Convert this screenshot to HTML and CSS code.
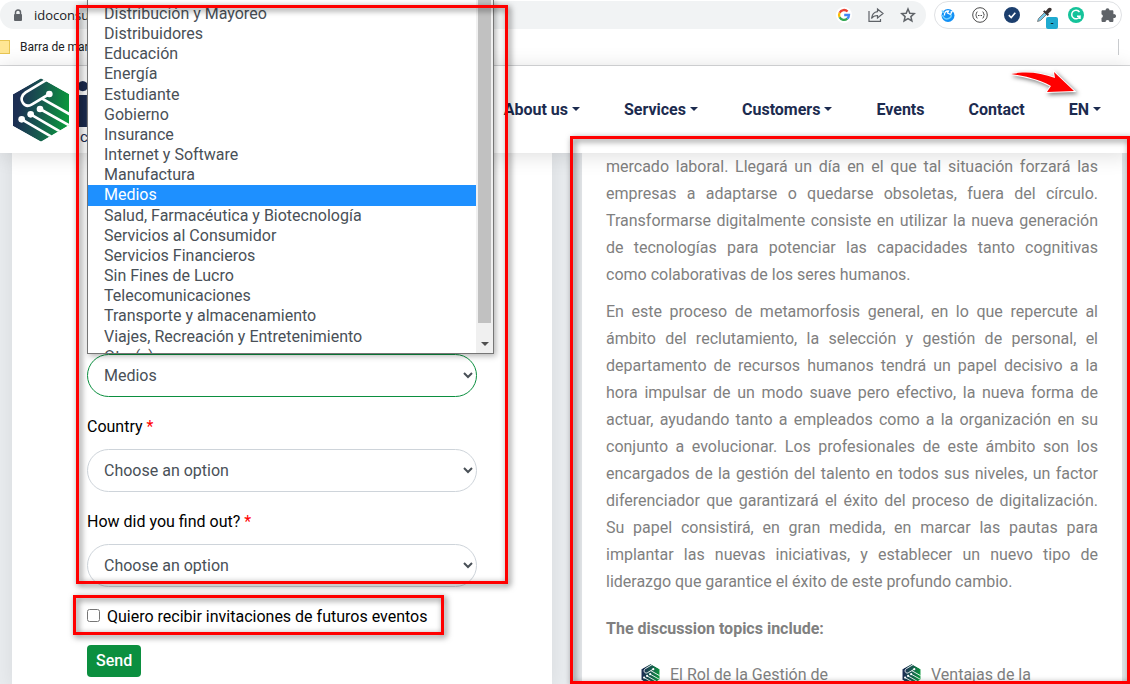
FILE: index.html
```html
<!DOCTYPE html>
<html lang="en">
<head>
<meta charset="utf-8">
<title>ido</title>
<link rel="stylesheet" href="styles.css">
</head>
<body>
<svg class="defs" aria-hidden="true">
  <defs>
    <linearGradient id="hex-fill" x1="0" y1="0.35" x2="1" y2="0.5">
      <stop offset="0.1" stop-color="#1c2f53"/>
      <stop offset="0.5" stop-color="#17594f"/>
      <stop offset="1" stop-color="#0a9a3c"/>
    </linearGradient>
    <symbol id="hex" viewBox="0 0 168 190">
      <clipPath id="hex-clip"><path d="M84 0L168 47V141L84 190L0 143V48Z"/></clipPath>
      <g clip-path="url(#hex-clip)">
        <path fill="url(#hex-fill)" d="M84 0L168 47V141L84 190L0 143V48Z"/>
        <g fill="none" stroke="#fff" stroke-width="8">
          <path d="M108 0L38 42C26 50 22 63 30 74C37 84 47 84 57 78L109 47"/>
          <path d="M86 60L172 109"/>
          <path d="M81 92L172 143M53 108L152 166M26 123L124 180"/>
        </g>
        <g fill="#fff">
          <circle cx="109" cy="47" r="10"/><circle cx="81" cy="92" r="10"/>
          <circle cx="53" cy="108" r="10"/><circle cx="26" cy="123" r="10"/>
        </g>
      </g>
    </symbol>
  </defs>
</svg>

<div class="browser">
  <div class="toolbar">
    <div class="address">
      <svg class="lock" viewBox="0 0 10 13"><path d="M2.5 6V3.5a2.5 2.5 0 0 1 5 0V6" fill="none" stroke="#5f6368" stroke-width="1.5"/><rect x="1" y="5" width="8" height="7" rx="1" fill="#5f6368"/></svg>
      <span class="url">idoconsu</span>
      <div class="address-tools">
        <button type="button" class="tool" aria-label="Google"><svg viewBox="0 0 16 16"><circle cx="8" cy="8" r="8" fill="#fff"/><g fill="none" stroke-width="2.3"><path d="M11.6 4.5A5 5 0 0 0 3.6 5.7" stroke="#ea4335"/><path d="M3.6 5.7a5 5 0 0 0 0 4.6" stroke="#fbbc05"/><path d="M3.6 10.3a5 5 0 0 0 7.7 1.4" stroke="#34a853"/><path d="M11.3 11.7A5 5 0 0 0 13 8H8.2" stroke="#4285f4"/></g></svg></button>
        <button type="button" class="tool" aria-label="Share"><svg viewBox="0 0 16 16" fill="none" stroke="#5f6368" stroke-width="1.2"><path d="M1 4V14.400H12.500V12"/><path d="M9.500 2L15 6.500L9.500 11V8.500C6.500 8.500 4.800 9.500 3.500 11.500C4 7.500 6 5 9.500 4.600Z"/></svg></button>
        <button type="button" class="tool" aria-label="Bookmark"><svg viewBox="0 0 16 16" fill="none" stroke="#5f6368" stroke-width="1.500"><path d="M8 2L9.800 6.200L14.300 6.600L10.900 9.600L11.900 14L8 11.700L4.100 14L5.100 9.600L1.700 6.600L6.200 6.200Z"/></svg></button>
      </div>
    </div>
    <div class="extensions">
      <button type="button" class="tool" aria-label="Browser sync"><svg viewBox="0 0 16 16"><circle cx="8" cy="8.500" r="6.500" fill="#1290f5"/><path d="M4.500 8.500C4 5.500 6 3.800 8.500 4L7.500 6L10.500 7.500L12 4.500L10.500 5" fill="none" stroke="#fff" stroke-width="1.300"/><path d="M2 3.500C2.500 5 3.200 5.600 4.500 5.500M2.500 8C3 11.500 6 12.500 8.500 11.500C10.500 10.800 11.500 9 11 7.500" fill="none" stroke="#6fd0ff" stroke-width="1.500"/></svg></button>
      <button type="button" class="tool" aria-label="JSON viewer"><svg viewBox="0 0 16 16" fill="none" stroke="#4b4b4b"><circle cx="8" cy="8" r="7.300"/><path d="M5.500 4.800C3.800 4.800 5 7.500 3.500 8C5 8.500 3.800 11.200 5.500 11.200M10.500 4.800C12.200 4.800 11 7.500 12.500 8C11 8.500 12.200 11.200 10.500 11.200"/><path d="M6 8.500H10" stroke-dasharray="1 0.500"/></svg></button>
      <button type="button" class="tool" aria-label="Checker"><svg viewBox="0 0 16 16"><circle cx="8" cy="8" r="8" fill="#1c3f6e"/><path d="M4.800 8.200L7.200 10.500L11.300 5.800" fill="none" stroke="#fff" stroke-width="1.600"/></svg></button>
      <button type="button" class="tool" aria-label="Color picker"><svg viewBox="0 0 16 16"><path d="M1.500 14.500L2.500 11.500L8.500 5.500L10.500 7.500L4.500 13.500Z" fill="#75c8e8" stroke="#777" stroke-width="0.900"/><path d="M7 4.500L8.500 3.200L9.700 4.200L12 1.500C13 0.500 14.500 0.500 15.200 1.300C16 2 15.700 3.500 14.800 4.300L12.200 6.600L13 7.700L11.600 9Z" fill="#3c3434"/></svg><span class="tool-badge">-</span></button>
      <button type="button" class="tool" aria-label="Grammar"><svg viewBox="0 0 16 16"><circle cx="8" cy="8" r="8" fill="#15c39a"/><path d="M11.500 5A4.300 4.300 0 1 0 12 9.200H9M12 9.200V12" fill="none" stroke="#fff" stroke-width="1.500"/></svg></button>
      <button type="button" class="tool" aria-label="Extensions"><svg viewBox="0 0 16 16"><path d="M1.500 4.500C1.500 3.700 2 3.200 2.800 3.200H5.500A2 2 0 1 1 9.500 3.200H12.200C13 3.200 13.400 3.700 13.400 4.500V7.200A2 2 0 1 1 13.400 11V13.700C13.400 14.500 13 15 12.200 15H9.500A2 2 0 0 0 5.500 15H2.800C2 15 1.500 14.500 1.500 13.700V11A2 2 0 0 0 1.500 7.200Z" fill="#5f6368"/></svg></button>
    </div>
  </div>
  <div class="bookmarks">
    <span class="folder"></span>
    <span class="bookmark">Barra de mar</span>
    <span class="divider"></span>
  </div>
</div>

<header class="site-header">
  <a class="brand" href="#">
    <svg class="brand-mark" aria-hidden="true"><use href="#hex"/></svg>
    <span class="brand-text"><span class="brand-name">i</span><span class="brand-sub">c</span></span>
  </a>
  <nav class="nav">
    <a class="caret" href="#">About us</a>
    <a class="caret" href="#">Services</a>
    <a class="caret" href="#">Customers</a>
    <a href="#">Events</a>
    <a href="#">Contact</a>
    <a class="caret" href="#">EN</a>
  </nav>
</header>

<main class="content">
  <form class="card form">
    <div class="field">
      <select class="select is-valid" aria-label="Medios"><option>Medios</option></select>
      <div class="popup">
        <ul class="options" role="listbox" aria-label="Medios">
          <li role="option">Distribución y Mayoreo</li>
          <li role="option">Distribuidores</li>
          <li role="option">Educación</li>
          <li role="option">Energía</li>
          <li role="option">Estudiante</li>
          <li role="option">Gobierno</li>
          <li role="option">Insurance</li>
          <li role="option">Internet y Software</li>
          <li role="option">Manufactura</li>
          <li role="option" class="selected" aria-selected="true">Medios</li>
          <li role="option">Salud, Farmacéutica y Biotecnología</li>
          <li role="option">Servicios al Consumidor</li>
          <li role="option">Servicios Financieros</li>
          <li role="option">Sin Fines de Lucro</li>
          <li role="option">Telecomunicaciones</li>
          <li role="option">Transporte y almacenamiento</li>
          <li role="option">Viajes, Recreación y Entretenimiento</li>
          <li role="option">Otro(s)</li>
        </ul>
        <div class="scrollbar"><span class="thumb"></span><span class="down"></span></div>
      </div>
    </div>
    <div class="field">
      <label for="country">Country <span class="required">*</span></label>
      <select class="select" id="country"><option>Choose an option</option></select>
    </div>
    <div class="field">
      <label for="source">How did you find out? <span class="required">*</span></label>
      <select class="select" id="source"><option>Choose an option</option></select>
    </div>
    <label class="check"><input type="checkbox"> Quiero recibir invitaciones de futuros eventos</label>
    <button type="submit" class="send">Send</button>
  </form>

  <article class="card article">
    <p>mercado laboral. Llegará un día en el que tal situación forzará las empresas a adaptarse o quedarse obsoletas, fuera del círculo. Transformarse digitalmente consiste en utilizar la nueva generación de tecnologías para potenciar las capacidades tanto cognitivas como colaborativas de los seres humanos.</p>
    <p>En este proceso de metamorfosis general, en lo que repercute al ámbito del reclutamiento, la selección y gestión de personal, el departamento de recursos humanos tendrá un papel decisivo a la hora impulsar de un modo suave pero efectivo, la nueva forma de actuar, ayudando tanto a empleados como a la organización en su conjunto a evolucionar. Los profesionales de este ámbito son los encargados de la gestión del talento en todos sus niveles, un factor diferenciador que garantizará el éxito del proceso de digitalización. Su papel consistirá, en gran medida, en marcar las pautas para implantar las nuevas iniciativas, y establecer un nuevo tipo de liderazgo que garantice el éxito de este profundo cambio.</p>
    <h2>The discussion topics include:</h2>
    <ul class="topics">
      <li><svg class="bullet" aria-hidden="true"><use href="#hex"/></svg>El Rol de la Gestión de</li>
      <li><svg class="bullet" aria-hidden="true"><use href="#hex"/></svg>Ventajas de la</li>
    </ul>
  </article>
</main>

<div class="frame frame-form"></div>
<div class="frame frame-check"></div>
<div class="frame frame-article"></div>
<svg class="arrow" viewBox="0 0 70 28" aria-hidden="true"><path d="M0 4C16 1 30 3 44 8L43 2L63 21L36 22L40 16C28 9 14 6 0 4Z" fill="#f00" stroke="#fff" stroke-width="2" paint-order="stroke"/></svg>
</body>
</html>
```
FILE: styles.css
```css
* { box-sizing: border-box; }

body {
  display: flex;
  flex-direction: column;
  position: relative;
  height: 100vh;
  margin: 0;
  overflow: hidden;
  background: #e9ecef;
  font: 16px/24px Roboto, sans-serif;
  color: #000;
}

a { color: inherit; text-decoration: none; }
button { font: inherit; border: 0; padding: 0; }
.defs { position: absolute; width: 0; height: 0; }

/* Browser bar */
.browser {
  flex: none;
  background: #fff;
  border-bottom: 1px solid #d8d9db;
  font-family: "Open Sans", sans-serif;
  color: #202124;
}
.toolbar {
  display: flex;
  gap: 8px;
  padding: 1px 8px 0 0;
}
.address {
  display: flex;
  flex: 1;
  align-items: center;
  height: 28px;
  padding: 0 10px 0 13px;
  border-radius: 14px;
  background: #f1f3f4;
}
.lock { width: 10px; height: 13px; margin-right: 11px; }
.url { font-size: 13px; }
.address-tools { display: flex; gap: 16px; margin-left: auto; }
.extensions {
  display: flex;
  align-items: center;
  gap: 16px;
  height: 28px;
  padding: 0 5px;
  border: 1px solid #dfe1e4;
  border-radius: 14px;
}
.tool {
  position: relative;
  width: 16px;
  height: 16px;
  background: none;
}
.tool svg { display: block; width: 16px; height: 16px; }
.tool-badge {
  position: absolute;
  left: 10px;
  top: 10px;
  width: 12px;
  height: 12px;
  border-radius: 2px;
  background: #1faad0;
  font-size: 10px;
  line-height: 11px;
}
.bookmarks {
  display: flex;
  align-items: center;
  gap: 10px;
  height: 36px;
  padding-right: 11px;
  font-family: Roboto, sans-serif;
  font-size: 12px;
}
.folder {
  width: 10px;
  height: 14px;
  border: 1px solid #e8c552;
  border-left: 0;
  background: #ffe694;
}
.divider { width: 1px; height: 16px; margin-left: auto; background: #c9cbce; }

/* Site header */
.site-header {
  position: relative;
  z-index: 1;
  display: flex;
  flex: none;
  align-items: center;
  justify-content: space-between;
  height: 87px;
  padding: 0 29px 0 13px;
  background: #fff;
  box-shadow: 0 2px 20px rgba(0, 0, 0, 0.14);
}
.brand { display: flex; align-items: center; gap: 6px; color: #1c2b4f; }
.brand-mark { width: 56px; height: 64px; }
.brand-text { display: flex; flex-direction: column; }
.brand-name { font-family: Lato, sans-serif; font-size: 60px; font-weight: 900; line-height: 54px; }
.brand-sub { padding-left: 5px; font-size: 15px; line-height: 12px; }
.nav {
  display: flex;
  gap: 44px;
  font-weight: 700;
  color: #1c2b4f;
}
.caret::after {
  content: "";
  display: inline-block;
  margin-left: 4px;
  vertical-align: 4px;
  border: 4px solid transparent;
  border-top-color: currentColor;
  border-bottom: 0;
}

/* Content */
.content {
  display: grid;
  flex: 1;
  grid-template-columns: 1fr 1fr;
  gap: 30px;
  min-height: 0;
  padding: 0 8px 0 12px;
}
.card { background: #fff; box-shadow: 0 0 20px rgba(0, 0, 0, 0.08); }

.form {
  display: flex;
  flex-direction: column;
  align-items: stretch;
  padding: 201px 75px 0;
}
.field { position: relative; display: flex; flex-direction: column; margin-bottom: 18px; }
.field label { margin-bottom: 10px; }
.required { color: #f00; }
.select {
  width: 100%;
  height: 43px;
  padding: 0 4px 0 12px;
  border: 1px solid #ced4da;
  border-radius: 22px;
  background: #fff;
  font: inherit;
  color: #495057;
}
.select.is-valid { border-color: #0b8f3f; }

.popup {
  position: absolute;
  z-index: 2;
  bottom: 100%;
  left: 0;
  display: flex;
  width: 407px;
  height: 354px;
  overflow: hidden;
  border: 1px solid #767676;
  border-top: 0;
  background: #fff;
  box-shadow: 2px 2px 6px rgba(0, 0, 0, 0.3);
  color: #495057;
}
.options {
  display: grid;
  flex: 1;
  grid-auto-rows: 1fr;
  height: 367px;
  margin: 0;
  padding: 4px 0 0;
  list-style: none;
  line-height: 20px;
}
.options li { padding-left: 16px; }
.options .selected { background: #1e90ff; color: #fff; }
.scrollbar {
  display: flex;
  flex-direction: column;
  align-items: center;
  justify-content: space-between;
  width: 17px;
  padding-bottom: 7px;
  background: #f0f0f0;
}
.thumb { width: 13px; height: 323px; background: #c1c1c1; }
.down { border: 4px solid transparent; border-top-color: #505050; border-bottom: 0; }

.check { display: flex; align-items: center; gap: 7px; }
.check input { width: 13px; height: 13px; margin: 0 0 4px; }
.send {
  align-self: flex-start;
  height: 32px;
  margin-top: 16px;
  padding: 0 9px;
  border-radius: 4px;
  background: #0b8f3f;
  color: #fff;
  font-weight: 500;
}

.article { padding: 0 24px; color: #808080; line-height: 27px; }
.article p { margin: 0 0 10px; text-align: justify; }
.article h2 { margin: 20px 0 19px; font-size: 16px; font-weight: 700; line-height: 27px; }
.topics {
  display: grid;
  grid-template-columns: 1fr 1fr;
  gap: 30px;
  margin: 0;
  padding: 0;
  list-style: none;
}
.topics li { display: flex; align-items: center; gap: 10px; padding-left: 35px; white-space: nowrap; }
.bullet { width: 19px; height: 21px; }

/* Annotations */
.frame {
  position: absolute;
  z-index: 3;
  border: 3px solid #f00;
  filter: drop-shadow(2px 2px 3px rgba(0, 0, 0, 0.6));
  pointer-events: none;
}
.frame-form { left: 76px; top: 5px; width: 432px; height: 579px; }
.frame-check { left: 73px; top: 595px; width: 371px; height: 40px; }
.frame-article { left: 570px; top: 136px; right: 0; bottom: 0; }
.arrow {
  position: absolute;
  z-index: 3;
  left: 1011px;
  top: 70px;
  width: 70px;
  height: 28px;
  filter: drop-shadow(2px 2px 2px rgba(0, 0, 0, 0.5));
}
```
